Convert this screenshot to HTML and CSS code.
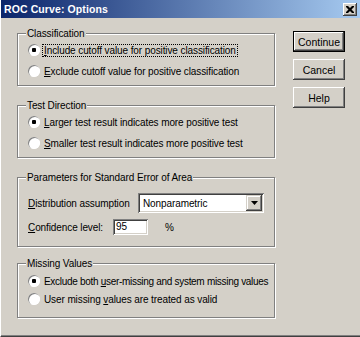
FILE: index.html
```html
<!DOCTYPE html>
<html lang="en">
<head>
  <meta charset="UTF-8" />
  <title>ROC Curve: Options</title>
  <link rel="stylesheet" href="styles.css">
</head>
<body>

  <div class="window">
    <!-- title bar -->
    <div class="titlebar">
      <span class="title">ROC Curve: Options</span>
      <span class="close-btn">
        <svg width="8" height="7" viewBox="0 0 8 7">
          <path d="M0 0h2l2 2 2-2h2v1l-2.5 2.5 2.5 2.5v1h-2l-2-2-2 2h-2v-1l2.5-2.5-2.5-2.5z" fill="#000"/>
        </svg>
      </span>
    </div>

    <div class="dialog-body">
      <div class="groups">

        <fieldset class="group">
          <legend>Classification</legend>
          <label class="option"><input type="radio" name="cls" checked><span class="focused"><u>I</u>nclude cutoff value for positive classification</span></label>
          <label class="option"><input type="radio" name="cls"><span><u>E</u>xclude cutoff value for positive classification</span></label>
        </fieldset>

        <fieldset class="group">
          <legend>Test Direction</legend>
          <label class="option"><input type="radio" name="dir" checked><span><u>L</u>arger test result indicates more positive test</span></label>
          <label class="option"><input type="radio" name="dir"><span><u>S</u>maller test result indicates more positive test</span></label>
        </fieldset>

        <fieldset class="group group-params">
          <legend>Parameters for Standard Error of Area</legend>
          <div class="field-row">
            <span class="field-label label-dist"><u>D</u>istribution assumption</span>
            <div class="combo">
              <span class="combo-text">Nonparametric</span>
              <span class="combo-arrow">
                <svg width="7" height="4" viewBox="0 0 7 4"><path d="M0 0h7l-3.5 4z" fill="#000"/></svg>
              </span>
            </div>
          </div>
          <div class="field-row">
            <span class="field-label label-conf"><u>C</u>onfidence level:</span>
            <div class="edit">95</div>
            <span class="unit">%</span>
          </div>
        </fieldset>

        <fieldset class="group group-missing">
          <legend>Missing Values</legend>
          <label class="option"><input type="radio" name="miss" checked><span class="tight">Exclude both <u>u</u>ser-missing and system missing values</span></label>
          <label class="option"><input type="radio" name="miss"><span>User missing <u>v</u>alues are treated as valid</span></label>
        </fieldset>

      </div>

      <div class="buttons">
        <button class="btn btn-default">Continue</button>
        <button class="btn">Cancel</button>
        <button class="btn">Help</button>
      </div>
    </div>
  </div>

</body>
</html>
```

FILE: styles.css
```css
:root {
  --face: #d4d0c8;
  --shadow: #808080;
  --dark: #404040;
}

body {
  margin: 0;
  background: var(--face);
  font-family: "Liberation Sans", Arial, sans-serif;
  font-size: 10px;
  letter-spacing: -0.1px;
  color: #000;
}

.window {
  width: 360px;
  height: 337px;
  box-sizing: border-box;
  background: var(--face);
  border-left: 1px solid #fff;
  border-bottom: 1px solid var(--dark);
  box-shadow: inset 0 -1px 0 var(--shadow);
  overflow: hidden;
}

/* title bar */
.titlebar {
  height: 18px;
  display: flex;
  align-items: center;
  justify-content: space-between;
  padding: 0 3px 0 3px;
  background: linear-gradient(to right, #0a246a, #a6caf0);
}
.title {
  color: #fff;
  font-weight: bold;
  font-size: 10.5px;
  letter-spacing: 0.1px;
}
.close-btn {
  width: 14px;
  height: 13px;
  display: flex;
  align-items: center;
  justify-content: center;
  background: var(--face);
  box-shadow: inset -1px -1px var(--dark), inset 1px 1px #fff, inset -2px -2px var(--shadow);
}

/* content */
.dialog-body {
  display: flex;
  padding: 9px 0 0 16px;
}
.groups {
  width: 258px;
  display: flex;
  flex-direction: column;
  gap: 13px;
}

.group {
  margin: 0;
  min-width: 0;
  padding: 2px 0 6px 10px;
  border: 1px solid var(--shadow);
  box-shadow: inset 1px 1px 0 #fff, 1px 1px 0 #fff;
  display: flex;
  flex-direction: column;
  gap: 5px;
}
.group legend {
  padding: 0 1px;
  margin-left: -2px;
  line-height: 13px;
  background: var(--face);
}
.group-params {
  padding-top: 9px;
  padding-bottom: 11px;
  gap: 6px;
}
.group-missing {
  margin-top: -3px;
  padding-top: 3px;
  padding-bottom: 10px;
  gap: 2px;
}

.option {
  display: flex;
  align-items: center;
  height: 16px;
  white-space: nowrap;
}
.option input {
  appearance: none;
  -webkit-appearance: none;
  width: 12px;
  height: 12px;
  margin: 0 3px 0 0;
  border-radius: 50%;
  background: #fff;
  box-shadow: inset 1px 1px 0 var(--shadow), inset -1px -1px 0 #fff;
}
.option input:checked {
  background: radial-gradient(circle, #000 0 2px, #fff 2.5px);
}
.option span {
  padding: 0 1px;
}
.option .focused {
  outline: 1px dotted #000;
}
.option .tight {
  letter-spacing: -0.3px;
}

/* parameter rows */
.field-row {
  display: flex;
  align-items: center;
  white-space: nowrap;
}
.label-dist { width: 110px; }
.label-conf { width: 85px; }

.combo {
  width: 126px;
  height: 20px;
  box-sizing: border-box;
  display: flex;
  align-items: center;
  justify-content: space-between;
  padding: 2px;
  background: #fff;
  box-shadow: inset 1px 1px var(--shadow), inset -1px -1px #fff, inset 2px 2px var(--dark), inset -2px -2px var(--face);
}
.combo-text { padding-left: 3px; }
.combo-arrow {
  width: 16px;
  height: 16px;
  display: flex;
  align-items: center;
  justify-content: center;
  background: var(--face);
  box-shadow: inset -1px -1px var(--dark), inset 1px 1px var(--face), inset -2px -2px var(--shadow), inset 2px 2px #fff;
}

.edit {
  width: 35px;
  height: 16px;
  box-sizing: border-box;
  padding: 2px 0 0 3px;
  background: #fff;
  box-shadow: inset 1px 1px var(--shadow), inset -1px -1px #fff, inset 2px 2px var(--dark), inset -2px -2px var(--face);
}
.unit { margin-left: 17px; }

/* buttons */
.buttons {
  display: flex;
  flex-direction: column;
  gap: 7px;
  margin-left: 18px;
  padding-top: 4px;
}
.btn {
  width: 52px;
  height: 21px;
  padding: 0;
  border: none;
  font-family: inherit;
  font-size: 10.5px;
  color: #000;
  background: var(--face);
  box-shadow: inset -1px -1px var(--dark), inset 1px 1px #fff, inset -2px -2px var(--shadow), inset 2px 2px var(--face);
}
.btn-default {
  box-shadow: inset 0 0 0 1px #000, inset -2px -2px var(--dark), inset 2px 2px #fff, inset -3px -3px var(--shadow);
}
```
